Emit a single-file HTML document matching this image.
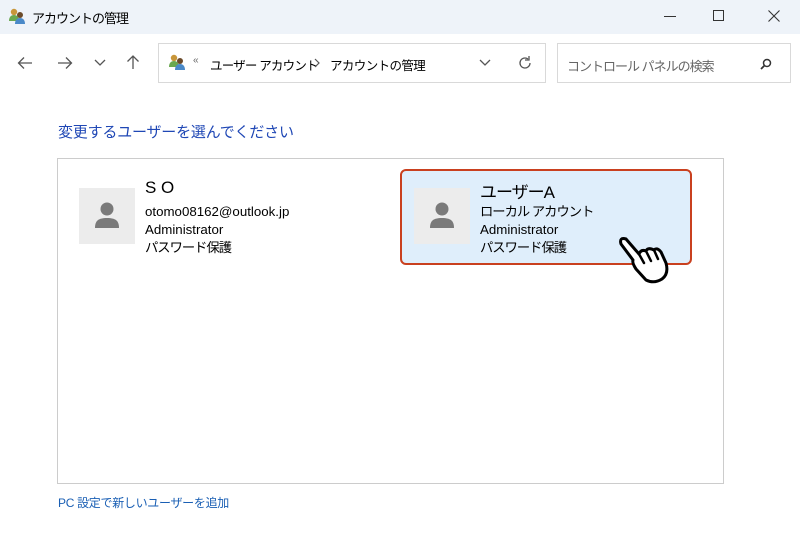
<!DOCTYPE html>
<html><head><meta charset="utf-8"><style>
*{margin:0;padding:0;box-sizing:border-box}
body{width:800px;height:533px;background:#fff;font-family:"Liberation Sans","Noto Sans CJK JP",sans-serif;position:relative;overflow:hidden;color:#000}
.t{position:absolute;white-space:nowrap}
.title{position:absolute;left:0;top:0;width:800px;height:34px;background:#eef3f9}
.box{position:absolute;border:1px solid #d9d9d9;background:#fff}
.av{position:absolute;width:56px;height:56px;background:#ececec}
.j{letter-spacing:-1px}
</style></head><body>
<div class="title"></div>
<svg class="t" style="left:8px;top:7px" width="18" height="18" viewBox="0 0 18 18"><circle cx="6" cy="5" r="3.2" fill="#c8963a"/><path d="M1 14c0-4 2-6 5-6s5 2 5 6z" fill="#6aa84f"/><circle cx="12" cy="8" r="3" fill="#6b4a2a"/><path d="M7 17c0-4 2-6 5-6s5 2 5 6z" fill="#4a89c8"/></svg>
<div class="t j" style="left:32px;top:8px;font-size:13px">アカウントの管理</div>
<svg class="t" style="left:664px;top:10px" width="12" height="12"><path d="M0 6.5h12" stroke="#333" stroke-width="1"/></svg>
<svg class="t" style="left:713px;top:10px" width="12" height="12"><rect x="0.5" y="0.5" width="10" height="10" stroke="#333" fill="none"/></svg>
<svg class="t" style="left:768px;top:10px" width="12" height="12"><path d="M0.5 0.5l11 11M11.5 0.5l-11 11" stroke="#333" stroke-width="1.1"/></svg>
<svg class="t" style="left:17px;top:56px" width="16" height="14"><path d="M15 7H2M7 1.5L1.5 7 7 12.5" stroke="#555" fill="none" stroke-width="1.3"/></svg>
<svg class="t" style="left:57px;top:56px" width="16" height="14"><path d="M1 7h13M9 1.5L14.5 7 9 12.5" stroke="#555" fill="none" stroke-width="1.3"/></svg>
<svg class="t" style="left:94px;top:59px" width="12" height="8"><path d="M1 1l5 5 5-5" stroke="#555" fill="none" stroke-width="1.3"/></svg>
<svg class="t" style="left:126px;top:54px" width="14" height="16"><path d="M7 15V2M1.5 7.5L7 2l5.5 5.5" stroke="#555" fill="none" stroke-width="1.3"/></svg>
<div class="box" style="left:158px;top:43px;width:388px;height:40px"></div>
<svg class="t" style="left:168px;top:53px" width="18" height="18" viewBox="0 0 18 18"><circle cx="6" cy="5" r="3.2" fill="#c8963a"/><path d="M1 14c0-4 2-6 5-6s5 2 5 6z" fill="#6aa84f"/><circle cx="12" cy="8" r="3" fill="#6b4a2a"/><path d="M7 17c0-4 2-6 5-6s5 2 5 6z" fill="#4a89c8"/></svg>
<div class="t" style="left:193px;top:55px;font-size:10px;color:#666">«</div>
<div class="t" style="left:210px;top:55px;font-size:12.5px;letter-spacing:-0.8px">ユーザー アカウント</div>
<svg class="t" style="left:314px;top:58px" width="6" height="10"><path d="M1 1l4 4-4 4" stroke="#555" fill="none" stroke-width="1.2"/></svg>
<div class="t" style="left:330px;top:55px;font-size:12.5px;letter-spacing:-0.6px">アカウントの管理</div>
<svg class="t" style="left:479px;top:59px" width="12" height="8"><path d="M1 1l5 5 5-5" stroke="#555" fill="none" stroke-width="1.3"/></svg>
<svg class="t" style="left:517px;top:55px" width="16" height="16" viewBox="0 0 16 16"><path d="M13 8a5 5 0 1 1-2-4" stroke="#555" fill="none" stroke-width="1.3"/><path d="M12 1v4H8" stroke="#555" fill="none" stroke-width="1.3"/></svg>
<div class="box" style="left:557px;top:43px;width:234px;height:40px"></div>
<div class="t" style="left:567px;top:56px;font-size:13px;color:#666;letter-spacing:-1px">コントロール パネルの検索</div>
<svg class="t" style="left:759px;top:57px" width="14" height="14"><circle cx="8" cy="6" r="3.5" stroke="#333" fill="none" stroke-width="1.5"/><path d="M5.5 8.5L2 12" stroke="#333" stroke-width="1.8"/></svg>
<div class="t" style="left:58px;top:121px;font-size:15px;color:#1f47b5;letter-spacing:-0.2px">変更するユーザーを選んでください</div>
<div class="box" style="left:57px;top:158px;width:667px;height:326px;border-color:#ccc"></div>
<div class="av" style="left:79px;top:188px"><svg width="56" height="56"><circle cx="28" cy="21" r="6.5" fill="#7a7a7a"/><path d="M16 40c0-7 3-10 12-10s12 3 12 10z" fill="#7a7a7a"/></svg></div>
<div class="t" style="left:145px;top:178px;font-size:17px">S O</div>
<div class="t" style="left:145px;top:203px;font-size:13.3px;line-height:18px">otomo08162@outlook.jp<br>Administrator<br><span style="letter-spacing:-1px">パスワード保護</span></div>
<div class="t" style="left:400px;top:169px;width:292px;height:96px;background:#dfeefb;border:2.5px solid #c9401f;border-radius:6px"></div>
<div class="av" style="left:414px;top:188px"><svg width="56" height="56"><circle cx="28" cy="21" r="6.5" fill="#7a7a7a"/><path d="M16 40c0-7 3-10 12-10s12 3 12 10z" fill="#7a7a7a"/></svg></div>
<div class="t" style="left:480px;top:178px;font-size:17px;letter-spacing:-1px">ユーザーA</div>
<div class="t" style="left:480px;top:203px;font-size:13.3px;line-height:18px"><span style="letter-spacing:-1px">ローカル アカウント</span><br>Administrator<br><span style="letter-spacing:-1px">パスワード保護</span></div>
<svg class="t" style="left:616px;top:234px" width="58" height="52" viewBox="0 0 58 52"><path d="M5 10Q3 3 10 5L23 20Q25 15 30 17Q32 13 38 16Q41 13 45 18L50 29Q53 40 46 45Q38 50 30 46L20 35Q16 29 17 26Z" fill="#fff" stroke="#000" stroke-width="3" stroke-linejoin="round"/><path d="M23 20l5 9M30 17l5 10M38 16l4 9" stroke="#000" stroke-width="2.5" fill="none" stroke-linecap="round"/></svg>
<div class="t" style="left:58px;top:494px;font-size:12px;color:#1a5fb4;letter-spacing:-0.3px">PC 設定で新しいユーザーを追加</div>
</body></html>
